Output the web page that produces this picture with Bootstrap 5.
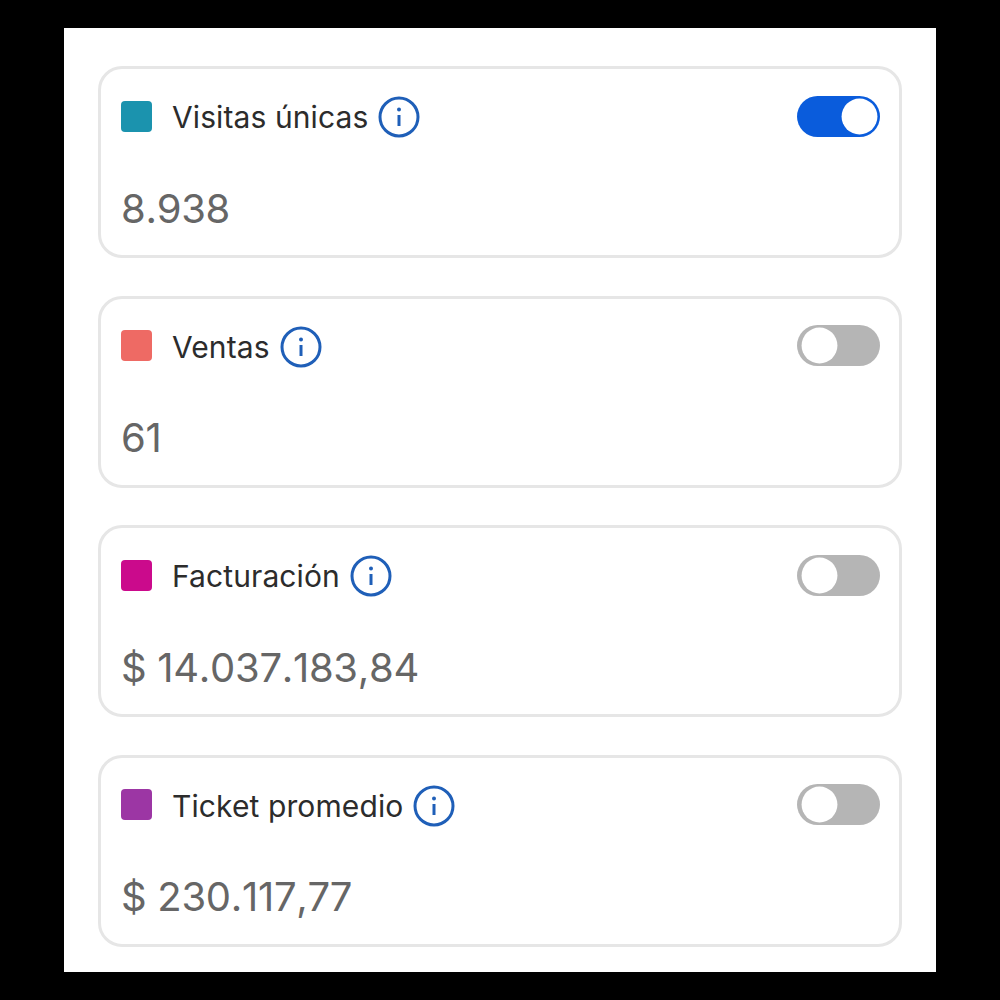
<!DOCTYPE html>
<html lang="es">
<head>
    <meta charset="UTF-8">
    <meta name="viewport" content="width=device-width, initial-scale=1.0">
    <title>Métricas</title>
    <link href="https://cdn.jsdelivr.net/npm/bootstrap@5.3.3/dist/css/bootstrap.min.css" rel="stylesheet" crossorigin="anonymous">
    <script src="https://cdn.jsdelivr.net/npm/bootstrap@5.3.3/dist/js/bootstrap.bundle.min.js" crossorigin="anonymous"></script>
    <style>
        html, body { background: #000; height: 1000px; overflow: hidden; }
        body { font-family: Inter, "Liberation Sans", sans-serif; padding-top: 28px; }
        .metric-panel { width: 872px; height: 944px; padding: 38px 34px 0; background: #fff; gap: 37.5px; }
        .metric-box { height: 192px; border: 3px solid #e6e6e6; border-radius: 24px; padding: 26px 19px 0 20px; }
        .metric-head { height: 42px; }
        .metric-swatch { width: 31px; height: 31px; border-radius: 4px; margin-right: 20px; }
        .metric-label { font-size: 30px; line-height: 42px; color: #2c2c2c; margin: 2px 10px 0 0; letter-spacing: 0.1px; }
        .metric-info { width: 42px; height: 42px; margin-top: 2px; color: #1f5fb8; }
        .metric-value { font-size: 40px; line-height: 48px; color: #666; margin-top: 47.5px; letter-spacing: -0.3px; font-kerning: none; }
        .form-switch.metric-switch { padding: 0; margin: 0; min-height: 0; line-height: 0; }
        .form-switch.metric-switch .form-check-input {
            width: 83px; height: 41px; margin: 0; float: none; border: 0; box-shadow: none;
            background-color: #b5b5b5;
            background-size: contain;
            background-position: 2px center;
            background-image: url("data:image/svg+xml,<svg xmlns='http://www.w3.org/2000/svg' viewBox='-4 -4 8 8'><circle r='3.5' fill='%23fff'/></svg>");
        }
        .form-switch.metric-switch .form-check-input:checked {
            background-color: #0a5cdc;
            background-position: right center;
        }
    </style>
</head>
<body>
<div class="metric-panel mx-auto d-flex flex-column">
    <div class="metric-box">
        <div class="metric-head d-flex align-items-center">
            <span class="metric-swatch" style="background: #1b93ae"></span>
            <span class="metric-label">Visitas únicas</span>
            <svg class="metric-info" viewBox="0 0 42 42" fill="none"><circle cx="21" cy="21" r="19" stroke="currentColor" stroke-width="3"/><circle cx="21" cy="13.5" r="2" fill="currentColor"/><path d="M21 19v11" stroke="currentColor" stroke-width="3"/></svg>
            <div class="form-check form-switch metric-switch ms-auto"><input class="form-check-input" type="checkbox" checked aria-label="Visitas únicas"></div>
        </div>
        <div class="metric-value">8.938</div>
    </div>
    <div class="metric-box">
        <div class="metric-head d-flex align-items-center">
            <span class="metric-swatch" style="background: #ee6a64"></span>
            <span class="metric-label">Ventas</span>
            <svg class="metric-info" viewBox="0 0 42 42" fill="none"><circle cx="21" cy="21" r="19" stroke="currentColor" stroke-width="3"/><circle cx="21" cy="13.5" r="2" fill="currentColor"/><path d="M21 19v11" stroke="currentColor" stroke-width="3"/></svg>
            <div class="form-check form-switch metric-switch ms-auto"><input class="form-check-input" type="checkbox" aria-label="Ventas"></div>
        </div>
        <div class="metric-value">61</div>
    </div>
    <div class="metric-box">
        <div class="metric-head d-flex align-items-center">
            <span class="metric-swatch" style="background: #cb0a8c"></span>
            <span class="metric-label">Facturación</span>
            <svg class="metric-info" viewBox="0 0 42 42" fill="none"><circle cx="21" cy="21" r="19" stroke="currentColor" stroke-width="3"/><circle cx="21" cy="13.5" r="2" fill="currentColor"/><path d="M21 19v11" stroke="currentColor" stroke-width="3"/></svg>
            <div class="form-check form-switch metric-switch ms-auto"><input class="form-check-input" type="checkbox" aria-label="Facturación"></div>
        </div>
        <div class="metric-value">$ 14.037.183,84</div>
    </div>
    <div class="metric-box">
        <div class="metric-head d-flex align-items-center">
            <span class="metric-swatch" style="background: #9c36a4"></span>
            <span class="metric-label">Ticket promedio</span>
            <svg class="metric-info" viewBox="0 0 42 42" fill="none"><circle cx="21" cy="21" r="19" stroke="currentColor" stroke-width="3"/><circle cx="21" cy="13.5" r="2" fill="currentColor"/><path d="M21 19v11" stroke="currentColor" stroke-width="3"/></svg>
            <div class="form-check form-switch metric-switch ms-auto"><input class="form-check-input" type="checkbox" aria-label="Ticket promedio"></div>
        </div>
        <div class="metric-value">$ 230.117,77</div>
    </div>
</div>
</body>
</html>
